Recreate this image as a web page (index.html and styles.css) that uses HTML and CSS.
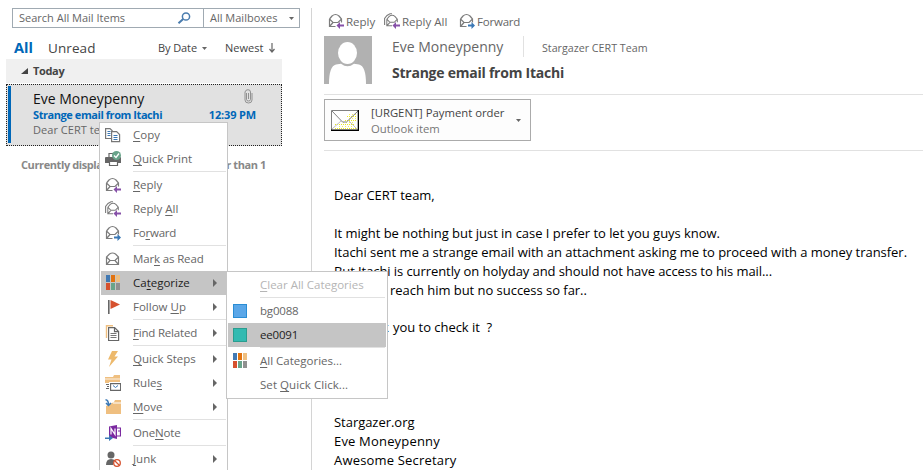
FILE: index.html
```
<!DOCTYPE html>
<html lang="en">
<head>
<meta charset="utf-8">
<title>Mail</title>
<link rel="stylesheet" href="styles.css">
</head>
<body>
<svg class="defs" width="0" height="0">
  <symbol id="env" viewBox="0 0 16 16"><path d="M1.500 6v7.500h6M1.500 6L4 3Q7.500 0 11 3l2.500 3v3.500M2 6.500L5 9.500h5l3-3M5 9.500L2 13" fill="none" stroke="#7c7c7c" stroke-width="1.200"/></symbol>
  <symbol id="reply" viewBox="0 0 16 16"><use href="#env"/><path d="M8.500 12.500l3.500-3.500v2.500h4v2h-4V16z" fill="#8650a8"/></symbol>
  <symbol id="replyall" viewBox="0 0 16 16"><path d="M.6 12V5.500L3 2.500 6 .8h2" fill="none" stroke="#7c7c7c" stroke-width="1.100"/><svg x="1.500" y="1" width="14" height="14"><use href="#env"/></svg><path d="M8.500 12.500l3.500-3.500v2.500h4v2h-4V16z" fill="#8650a8"/></symbol>
  <symbol id="forward" viewBox="0 0 16 16"><use href="#env"/><path d="M16 12.500L12.500 9v2.500H9v2h3.500V16z" fill="#3b78b5"/></symbol>
  <symbol id="cats" viewBox="0 0 16 16"><path fill="#4179b3" d="M1 0h4v7H1z"/><path fill="#e2730f" d="M6 0h4v7H6z"/><path fill="#efbf80" d="M11 0h4v7h-4z"/><path fill="#d6512e" d="M1 8h4v7H1z"/><path fill="#68a48a" d="M6 8h4v7H6z"/><path fill="#909090" d="M11 8h4v7h-4z"/></symbol>
  <symbol id="arrow" viewBox="0 0 4 8"><path d="M0 0l4 4-4 4z" fill="#666"/></symbol>
  <symbol id="down" viewBox="0 0 5 3"><path d="M0 0h5L2.500 3z" fill="#666"/></symbol>
</svg>
<div class="app">
  <section class="list">
    <div class="search">
      <div class="query"><span>Search All Mail Items</span>
        <svg width="14" height="12" viewBox="0 0 14 12"><circle cx="9" cy="4.500" r="3.600" fill="none" stroke="#4a7cae" stroke-width="1.500"/><path d="M6.200 7L1.500 11.200" stroke="#4a7cae" stroke-width="2"/></svg></div>
      <div class="scope"><span>All Mailboxes</span><svg width="5" height="3"><use href="#down"/></svg></div>
    </div>
    <div class="tabs">
      <b>All</b><span class="unread">Unread</span>
      <span class="date">By Date</span><svg width="5" height="3"><use href="#down"/></svg>
      <span class="newest">Newest</span><svg width="6" height="10" viewBox="0 0 6 10"><path d="M3 0v9M.5 6L3 9l2.500-3" fill="none" stroke="#666" stroke-width="1.200"/></svg>
    </div>
    <div class="group"><svg width="7" height="6"><path d="M7 0v6H0z" fill="#444"/></svg><b>Today</b></div>
    <article class="message">
      <div class="row"><span class="from">Eve Moneypenny</span><svg width="9" height="15" viewBox="0 0 9 15"><path d="M2.500 4v6.500q0 1.500 2 1.500t2-1.500V3q0-2.300-2.500-2.300T1 3v8q0 3 3.500 3T8 11V4M4.500 4v6" fill="none" stroke="#888" stroke-width=".9"/></svg></div>
      <div class="row bold"><span>Strange email from Itachi</span><span class="time">12:39 PM</span></div>
      <div class="row preview">Dear CERT team,</div>
    </article>
    <div class="notice"><span>Currently displaying</span><span>newer than 1</span></div>
  </section>
  <main class="reader">
    <div class="actions">
      <span class="act1"><svg width="16" height="16"><use href="#reply"/></svg>Reply</span>
      <span class="act2"><svg width="16" height="16"><use href="#replyall"/></svg>Reply All</span>
      <span class="act3"><svg width="16" height="16"><use href="#forward"/></svg>Forward</span>
    </div>
    <header class="head">
      <svg width="48" height="48" viewBox="0 0 48 48"><path fill="#b1b1b1" d="M0 0h48v48H0z"/><ellipse cx="23.500" cy="17" rx="9.500" ry="11" fill="#fff"/><path d="M5 48q0-18 7-19.500l5-.8q6.500 5 13 0l5 .8q7 1.500 7 19.500z" fill="#fff"/></svg>
      <div>
        <div class="people"><span class="sender">Eve Moneypenny</span><span class="to">Stargazer CERT Team</span></div>
        <h1>Strange email from Itachi</h1>
      </div>
    </header>
    <div class="attachments">
      <div class="file">
        <svg width="28" height="21" viewBox="0 0 28 21"><path fill="#fff" d="M0 0h28v21H0z"/><path d="M16 6.500h10M4 14.500h20M14 10.500h12M4 18.500h22" stroke="#eeea20" stroke-dasharray="1 1"/><path d="M18 4.500h8M8 16.500h16M18 8.500h8M12 12.500h12" stroke="#f3ef60" stroke-dasharray="1 2"/><path d="M.5 20V.5H27M1 1l10.500 11h4L27 1" fill="none" stroke="#808080"/><path d="M1 19l9-8M26 19l-8-8" fill="none" stroke="#c0c0c0"/><path d="M0 20.250h28M27.400 0v21" stroke="#000" stroke-width="1.400"/></svg>
        <div class="name"><span>[URGENT] Payment order</span><span class="kind">Outlook item</span></div>
        <svg width="5" height="3"><use href="#down"/></svg>
      </div>
    </div>
    <div class="body">
      <p>Dear CERT team,</p>
      <p>&nbsp;</p>
      <p>It might be nothing but just in case I prefer to let you guys know.</p>
      <p>Itachi sent me a strange email with an attachment asking me to proceed with a money transfer.</p>
      <p class="tight">But Itachi is currently on holyday and should not have access to his mail...</p>
      <p><span class="tried">I tried to</span>reach him but no success so far..</p>
      <p>&nbsp;</p>
      <p><span class="ask">Can I ask</span>you to check it&nbsp; ?</p>
      <p>&nbsp;</p>
      <p>&nbsp;</p>
      <p>&nbsp;</p>
      <p>&nbsp;</p>
      <p>Stargazer.org</p>
      <p class="wide">Eve Moneypenny</p>
      <p class="wide">Awesome Secretary</p>
    </div>
  </main>
</div>

<div class="menu context">
  <div class="item"><svg width="16" height="16" viewBox="0 0 16 16"><path d="M6 11.500H.600V1.600H5L7.500 4M6.600 4.600h5l3 3v7h-8z" fill="#fff" stroke="#777" stroke-width="1.200"/><path d="M2.500 4.500h3M2.500 6.500h3M2.500 8.500h3M8.500 8.500h4M8.500 10.500h4M8.500 12.500h4" stroke="#3b78b5"/></svg><span class="label"><u>C</u>opy</span></div>
  <div class="item"><svg width="16" height="16" viewBox="0 0 16 16"><path fill="#666" d="M0 7q0-1 1-1h14q1 0 1 1v5h-3v-2H4v2H0z"/><path d="M4 6V2.500h4M4.500 10.500h8v4h-8z" fill="#fff" stroke="#666" stroke-width="1.200"/><circle cx="11.500" cy="4.500" r="4.500" fill="#68a48a"/><path d="M9 4.500l2 2 3-4" fill="none" stroke="#fff" stroke-width="1.300"/></svg><span class="label"><u>Q</u>uick Print</span></div>
  <hr>
  <div class="item"><svg width="16" height="16"><use href="#reply"/></svg><span class="label"><u>R</u>eply</span></div>
  <div class="item"><svg width="16" height="16"><use href="#replyall"/></svg><span class="label">Reply <u>A</u>ll</span></div>
  <div class="item"><svg width="16" height="16"><use href="#forward"/></svg><span class="label forward">Fo<u>r</u>ward</span></div>
  <hr>
  <div class="item"><svg width="16" height="16" viewBox="0 0 16 16"><path d="M1.500 6v7.500h12V6L10.500 3Q7.500 1 4.500 3zM2 6.500l3 3h5l3-3M5 9.500l-3 3.500M10 9.500l3 3.500" fill="#fff" stroke="#7c7c7c" stroke-width="1.200"/></svg><span class="label read">Mar<u>k</u> as Read</span></div>
  <div class="item active"><svg width="16" height="16"><use href="#cats"/></svg><span class="label">Ca<u>t</u>egorize</span><svg class="more" width="4" height="8"><use href="#arrow"/></svg></div>
  <div class="item"><svg width="16" height="16" viewBox="0 0 16 16"><path d="M3.800 1v14" stroke="#666" stroke-width="1.600"/><path d="M5.500 1L15 5.500 5.500 10z" fill="#d6512e"/></svg><span class="label">Follow <u>U</u>p</span><svg class="more" width="4" height="8"><use href="#arrow"/></svg></div>
  <hr>
  <div class="item"><svg width="16" height="16" viewBox="0 0 16 16"><path d="M1.500 13V.700H8" fill="none" stroke="#efbf80" stroke-width="1.400"/><path d="M3.600 2.600h6l4 4v9h-10zM9.500 2.600v4h4" fill="#fff" stroke="#666" stroke-width="1.200"/><path d="M5.500 8.500h6M5.500 10.500h6M5.500 12.500h6" stroke="#777"/></svg><span class="label find"><u>F</u>ind Related</span><svg class="more" width="4" height="8"><use href="#arrow"/></svg></div>
  <hr>
  <div class="item"><svg width="16" height="16" viewBox="0 0 16 16"><path d="M7 0h6L9.500 5.500H13L4 16l2.500-7.500H3z" fill="#edb96c"/></svg><span class="label"><u>Q</u>uick Steps</span><svg class="more" width="4" height="8"><use href="#arrow"/></svg></div>
  <div class="item"><svg width="16" height="16" viewBox="0 0 16 16"><path d="M0 2h8l1-2h6v9H0z" fill="#efbf80"/><path d="M0 4h15" stroke="#fff" stroke-width=".8"/><path d="M4 7h12v9H4z" fill="#fff"/><path d="M0 8h4v8H0z" fill="#fff"/><path d="M5.600 8.600h10v6.800h-10z" fill="#fff" stroke="#666" stroke-width="1.100"/><path d="M8 10.500l2.500 2 2.500-2" fill="none" stroke="#3b78b5"/><path d="M1 9.500h3M2 11.500h2M1 13.500h3" stroke="#666"/></svg><span class="label">Rule<u>s</u></span><svg class="more" width="4" height="8"><use href="#arrow"/></svg></div>
  <div class="item"><svg width="16" height="16" viewBox="0 0 16 16"><path d="M1 15V7l8-4 1-2h6v14z" fill="#efbf80"/><path d="M8 4h8" stroke="#fff"/><path d="M.5.800Q3.500 1 3.500 6M1 4l2.500 2.500L6 4" fill="none" stroke="#3b78b5" stroke-width="1.500"/></svg><span class="label"><u>M</u>ove</span><svg class="more" width="4" height="8"><use href="#arrow"/></svg></div>
  <hr>
  <div class="item"><svg width="16" height="16" viewBox="0 0 16 16"><path d="M4 1.500L12 0v14l-8-2z" fill="#7b2aa0"/><path d="M12 3h3.500v8H12M13 6h3" fill="none" stroke="#7b2aa0" stroke-width="1.200"/><path d="M6 9.500v-6l4 6v-6" fill="none" stroke="#fff" stroke-width="1.200"/><path d="M0 12.500h4V10l4 3-4 3v-2H0z" fill="#3b78b5"/></svg><span class="label onenote">One<u>N</u>ote</span></div>
  <hr>
  <div class="item"><svg width="16" height="16" viewBox="0 0 16 16"><circle cx="6" cy="4" r="3.500" fill="#666"/><path d="M1 14q0-6 5-6 3 0 4 2l-2 4z" fill="#666"/><circle cx="12" cy="12" r="3.300" fill="#fff" stroke="#d6512e" stroke-width="1.300"/><path d="M9.500 9.500l5 5" stroke="#d6512e" stroke-width="1.200"/></svg><span class="label"><u>J</u>unk</span><svg class="more" width="4" height="8"><use href="#arrow"/></svg></div>
</div>

<div class="menu sub">
  <div class="item disabled"><i></i><span class="label"><u>C</u>lear All Categories</span></div>
  <hr>
  <div class="item"><i class="swatch blue"></i><span class="label code">bg0088</span></div>
  <div class="item active"><i class="swatch green"></i><span class="label code">ee0091</span></div>
  <hr>
  <div class="item"><svg width="16" height="16"><use href="#cats"/></svg><span class="label"><u>A</u>ll Categories...</span></div>
  <div class="item"><i></i><span class="label set">Set <u>Q</u>uick Click...</span></div>
</div>
</body>
</html>
```
FILE: styles.css
```
* { box-sizing: border-box; }
body { margin: 0; width: 923px; height: 470px; overflow: hidden; position: relative; background: #fff; font: 11px/16px "Open Sans", sans-serif; color: #666; white-space: nowrap; }
svg { display: block; flex: none; }
.defs { position: absolute; }
.app { display: flex; height: 470px; }
.list { width: 311px; padding: 8px 0 0 6px; }
.search { display: flex; width: 288px; height: 20px; margin-left: 6px; border: 1px solid #a0aab2; }
.query { width: 191px; padding: 0 12px 0 6px; display: flex; align-items: center; justify-content: space-between; border-right: 1px solid #a0aab2; }
.scope { flex: 1; padding: 0 5px 0 6px; display: flex; align-items: center; justify-content: space-between; }
.tabs { display: flex; align-items: center; height: 31px; padding: 9px 0 0 8px; color: #444; }
.tabs b { color: #0067b8; font-size: 14.500px; width: 34px; }
.unread { font-size: 13.500px; width: 110px; letter-spacing: .1px; }
.date { width: 44px; letter-spacing: -.1px; }
.newest { width: 38px; margin: 0 6px 0 18px; }
.group { display: flex; align-items: center; gap: 5px; width: 276px; height: 24px; padding-left: 15px; background: #f0f0f0; color: #444; letter-spacing: -.35px; }
.message { width: 276px; height: 62px; margin-top: 1px; padding: 6px 25px 0 21px; background: linear-gradient(#0067b8, #0067b8) 1px 1px / 3px 57px no-repeat #e1e1e1; border: 1px dotted #222; }
.row { display: flex; justify-content: space-between; height: 16px; line-height: 16px; margin-left: 5px; }
.from { font-size: 14px; color: #111; }
.row > svg { margin: -2px 3px 0 0; }
.bold { font-weight: 700; color: #0067b8; letter-spacing: -.43px; }
.time { letter-spacing: -.15px; }
.preview { letter-spacing: .05px; height: 14px; line-height: 14px; }
.notice { display: flex; justify-content: space-between; width: 245px; margin: 11px 0 0 15px; font-weight: 700; color: #888; letter-spacing: -.4px; }
.reader { flex: 1; height: 462px; margin-top: 8px; border-left: 1px solid #d4d4d4; padding-left: 12px; }
.actions { display: flex; height: 28px; padding: 6px 0 0 4px; font-size: 11.500px; }
.actions span { display: flex; gap: 2px; height: 16px; }
.actions svg { margin-top: -1px; }
.act1 { width: 56px; }
.act2 { width: 75px; }
.act3 { letter-spacing: -.2px; }
.head { display: flex; gap: 20px; height: 59px; border-bottom: 1px solid #e1e1e1; }
.people { display: flex; height: 21px; line-height: 21px; }
.sender { width: 132px; border-right: 1px solid #e1e1e1; font-size: 14px; }
.to { margin-left: 18px; font-size: 10.700px; line-height: 24px; }
h1 { margin: 6px 0 0; font-size: 14px; line-height: 20px; letter-spacing: -.24px; color: #444; }
.attachments { height: 56px; padding-top: 4px; border-bottom: 1px solid #e1e1e1; }
.file { display: flex; align-items: center; width: 207px; height: 42px; padding: 0 9px 0 6px; border: 1px solid #ababab; background: #fdfdfd; }
.name { width: 146px; margin-left: 12px; padding-top: 2px; display: flex; flex-direction: column; font-size: 11.300px; color: #444; }
.kind { color: #777; }
.body { padding: 35px 0 0 10px; font-size: 13px; line-height: 18.900px; color: #000; }
p { margin: 0; letter-spacing: -.035px; }
.tight { letter-spacing: -.08px; }
.wide { letter-spacing: .18px; }
.tried, .ask { display: inline-block; width: 56px; }
.ask { width: 59px; padding-left: 1px; }
.menu { position: absolute; border: 1px solid #c6c6c6; background: #fff; color: #666; font-size: 11.500px; }
.context { left: 99px; top: 122px; width: 129px; height: 356px; }
.sub { left: 226px; top: 271px; width: 162px; height: 128px; padding: 1px; }
.item { display: flex; align-items: center; height: 24px; padding-left: 4px; margin-left: 1px; }
.item i { width: 16px; height: 16px; }
.context .label { margin-left: 12px; }
.sub .label { margin-left: 12px; }
.sub .item { margin: 0; }
.more { margin: 0 10px 0 auto; }
.active { background: #c5c5c5; color: #222; }
.disabled { color: #b5b5b5; }
u { text-decoration: underline; text-underline-offset: 2px; text-decoration-thickness: 1px; }
hr { height: 2px; margin: 0 1px 0 33px; border: 0; background: linear-gradient(#e1e1e1, #e1e1e1) 0 0 / 100% 1px no-repeat; }
.sub hr { margin-left: 32px; }
.item .swatch { width: 14px; height: 14px; margin: 0 1px; border: 1px solid #2a8dd4; background: #5ba7e8; }
.item .green { border-color: #2a9d8f; background: #33bab1; }
.forward, .find, .code { letter-spacing: -.2px; }
.read, .onenote { letter-spacing: -.15px; }
.set { letter-spacing: .06px; }
```
